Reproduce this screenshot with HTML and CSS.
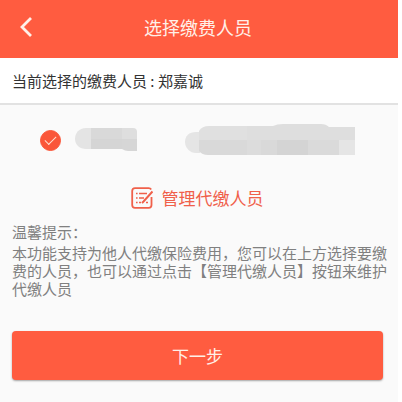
FILE: index.html
```html
<!DOCTYPE html>
<html lang="zh-CN">

<head>
    <meta charset="UTF-8">
    <meta name="viewport" content="width=device-width, initial-scale=1.0">
    <title>选择缴费人员</title>
    <link rel="stylesheet" href="styles.css">
</head>

<body>
    <div class="page">
        <!-- Header -->
        <header class="header">
            <button type="button" class="back" aria-label="返回">
                <svg width="12" height="20" viewBox="0 0 12 20">
                    <path d="M11 1L2 10L11 19" fill="none" stroke="#fff0e8" stroke-width="2.8" />
                </svg>
            </button>
            <h1>选择缴费人员</h1>
        </header>

        <div class="current">当前选择的缴费人员 : 郑嘉诚</div>

        <!-- Person list -->
        <label class="person">
            <input type="radio" name="person" aria-label="郑嘉诚" checked>
            <svg class="masked-name" width="62" height="24" viewBox="0 0 62 24">
                <path d="M11 0C4 0 0 5 0 11S5 21 11 21H16V0Z" fill="#e4e4e4" />
                <path d="M16 0H47V21H16Z" fill="#d5d5d5" />
                <path d="M16 0H47V11H16Z" fill="#d9d9d9" />
                <path d="M47 0H58Q62 0 62 4V11H47Z" fill="#dedede" />
                <path d="M47 11H62V23H53Q50 23 47 21Z" fill="#d6d6d6" />
            </svg>
            <svg class="masked-id" width="170" height="31" viewBox="0 0 170 31">
                <path d="M11 8C4 8 0 12 0 18S5 29 11 29H15V8Z" fill="#e5e5e5" />
                <path d="M14 7Q17 2 24 2H62V16H14Z" fill="#e0e0e0" />
                <path d="M62 2H88Q92 0 98 0H136Q141 0 144 3H170V16H62Z" fill="#dedede" />
                <path d="M14 16H62V31H23Q17 31 14 27Z" fill="#d9d9d9" />
                <path d="M62 16H76V31H62Z" fill="#dcdcdc" />
                <path d="M76 16H92V31H76Z" fill="#d9d9d9" />
                <path d="M92 16H123V31H92Z" fill="#d4d4d4" />
                <path d="M123 16H154V31H123Z" fill="#dadada" />
                <path d="M154 16H170V31H154Z" fill="#e5e5e5" />
            </svg>
        </label>

        <!-- Manage link -->
        <a href="#" class="manage">
            <svg width="22" height="22" viewBox="0 0 22 22" fill="none" stroke="#f0604a">
                <path d="M20.5 10V18Q20.5 20.8 17.7 20.8H4Q1.2 20.8 1.2 18V4Q1.2 1.2 4 1.2H17.7Q19.4 1.2 20.2 2.4" stroke-width="1.8" />
                <path d="M5 6.5H6.6M8 6.5H16M5 11H6.6M8 11H13M5 15.5H6.6M8 15.5H10M15 15.5H17" stroke-width="1.6" />
                <path d="M21.5 4.5L12.5 14.5L11 16" stroke-width="2" />
            </svg>
            管理代缴人员
        </a>

        <!-- Tips -->
        <section class="tips">
            <h2>温馨提示：</h2>
            <p>本功能支持为他人代缴保险费用，您可以在上方选择要缴费的人员，也可以通过点击【管理代缴人员】按钮来维护代缴人员</p>
        </section>

        <button type="button" class="next">下一步</button>
    </div>
</body>

</html>
```
FILE: styles.css
```css
* {
    box-sizing: border-box;
}

body {
    margin: 0;
    background: #ffffff;
    font-family: "Noto Sans CJK SC", sans-serif;
    color: #333333;
}

.page {
    min-height: 100vh;
    margin-right: 4px;
    background: #fafafa;
}

.header {
    display: grid;
    grid-template-columns: 52px 1fr 54px;
    align-items: center;
    height: 58px;
    padding-bottom: 4px;
    background: #ff5c40;
}

.back {
    display: flex;
    padding: 0 20px;
    border: none;
    background: none;
    cursor: pointer;
}

h1 {
    margin: 0;
    font-size: 18px;
    font-weight: 400;
    line-height: 24px;
    text-align: center;
    color: #fff0e8;
}

.current {
    padding: 12px;
    border-bottom: 2px solid #e2e2e2;
    background: #ffffff;
    font-size: 15px;
    line-height: 21px;
}

.person {
    display: flex;
    align-items: center;
    padding: 19px 40px 0;
}

.person input {
    appearance: none;
    display: flex;
    align-items: center;
    justify-content: center;
    width: 21px;
    height: 21px;
    margin: 2px 0 0;
    border: 1px solid #cccccc;
    border-radius: 50%;
}

.person input:checked {
    border-color: #fa5639;
    background: #fa5639;
}

.person input:checked::before {
    content: "";
    width: 10px;
    height: 5px;
    margin-bottom: 3px;
    border-left: 1px solid #ffe0d0;
    border-bottom: 1px solid #ffe0d0;
    transform: rotate(-45deg);
}

.masked-name {
    margin-left: 14px;
}

.masked-id {
    margin-left: 48px;
}

.manage {
    display: flex;
    align-items: center;
    justify-content: center;
    gap: 9px;
    margin-top: 31px;
    padding-right: 4px;
    font-size: 17px;
    line-height: 24px;
    color: #f0604a;
    text-decoration: none;
}

.tips {
    padding: 13px 8px 0 12px;
    font-size: 15px;
    line-height: 18px;
    color: #808080;
}

.tips h2 {
    margin: 0 0 3px;
    font-size: 15px;
    font-weight: 400;
}

.tips p {
    margin: 0;
}

.next {
    display: block;
    width: calc(100% - 27px);
    height: 49px;
    margin: 33px 15px 0 12px;
    border: none;
    border-radius: 4px;
    background: #ff5c40;
    box-shadow: 0 1px 2px rgba(0, 0, 0, 0.35);
    font-family: inherit;
    font-size: 17px;
    color: #fff0e8;
    cursor: pointer;
}
```
